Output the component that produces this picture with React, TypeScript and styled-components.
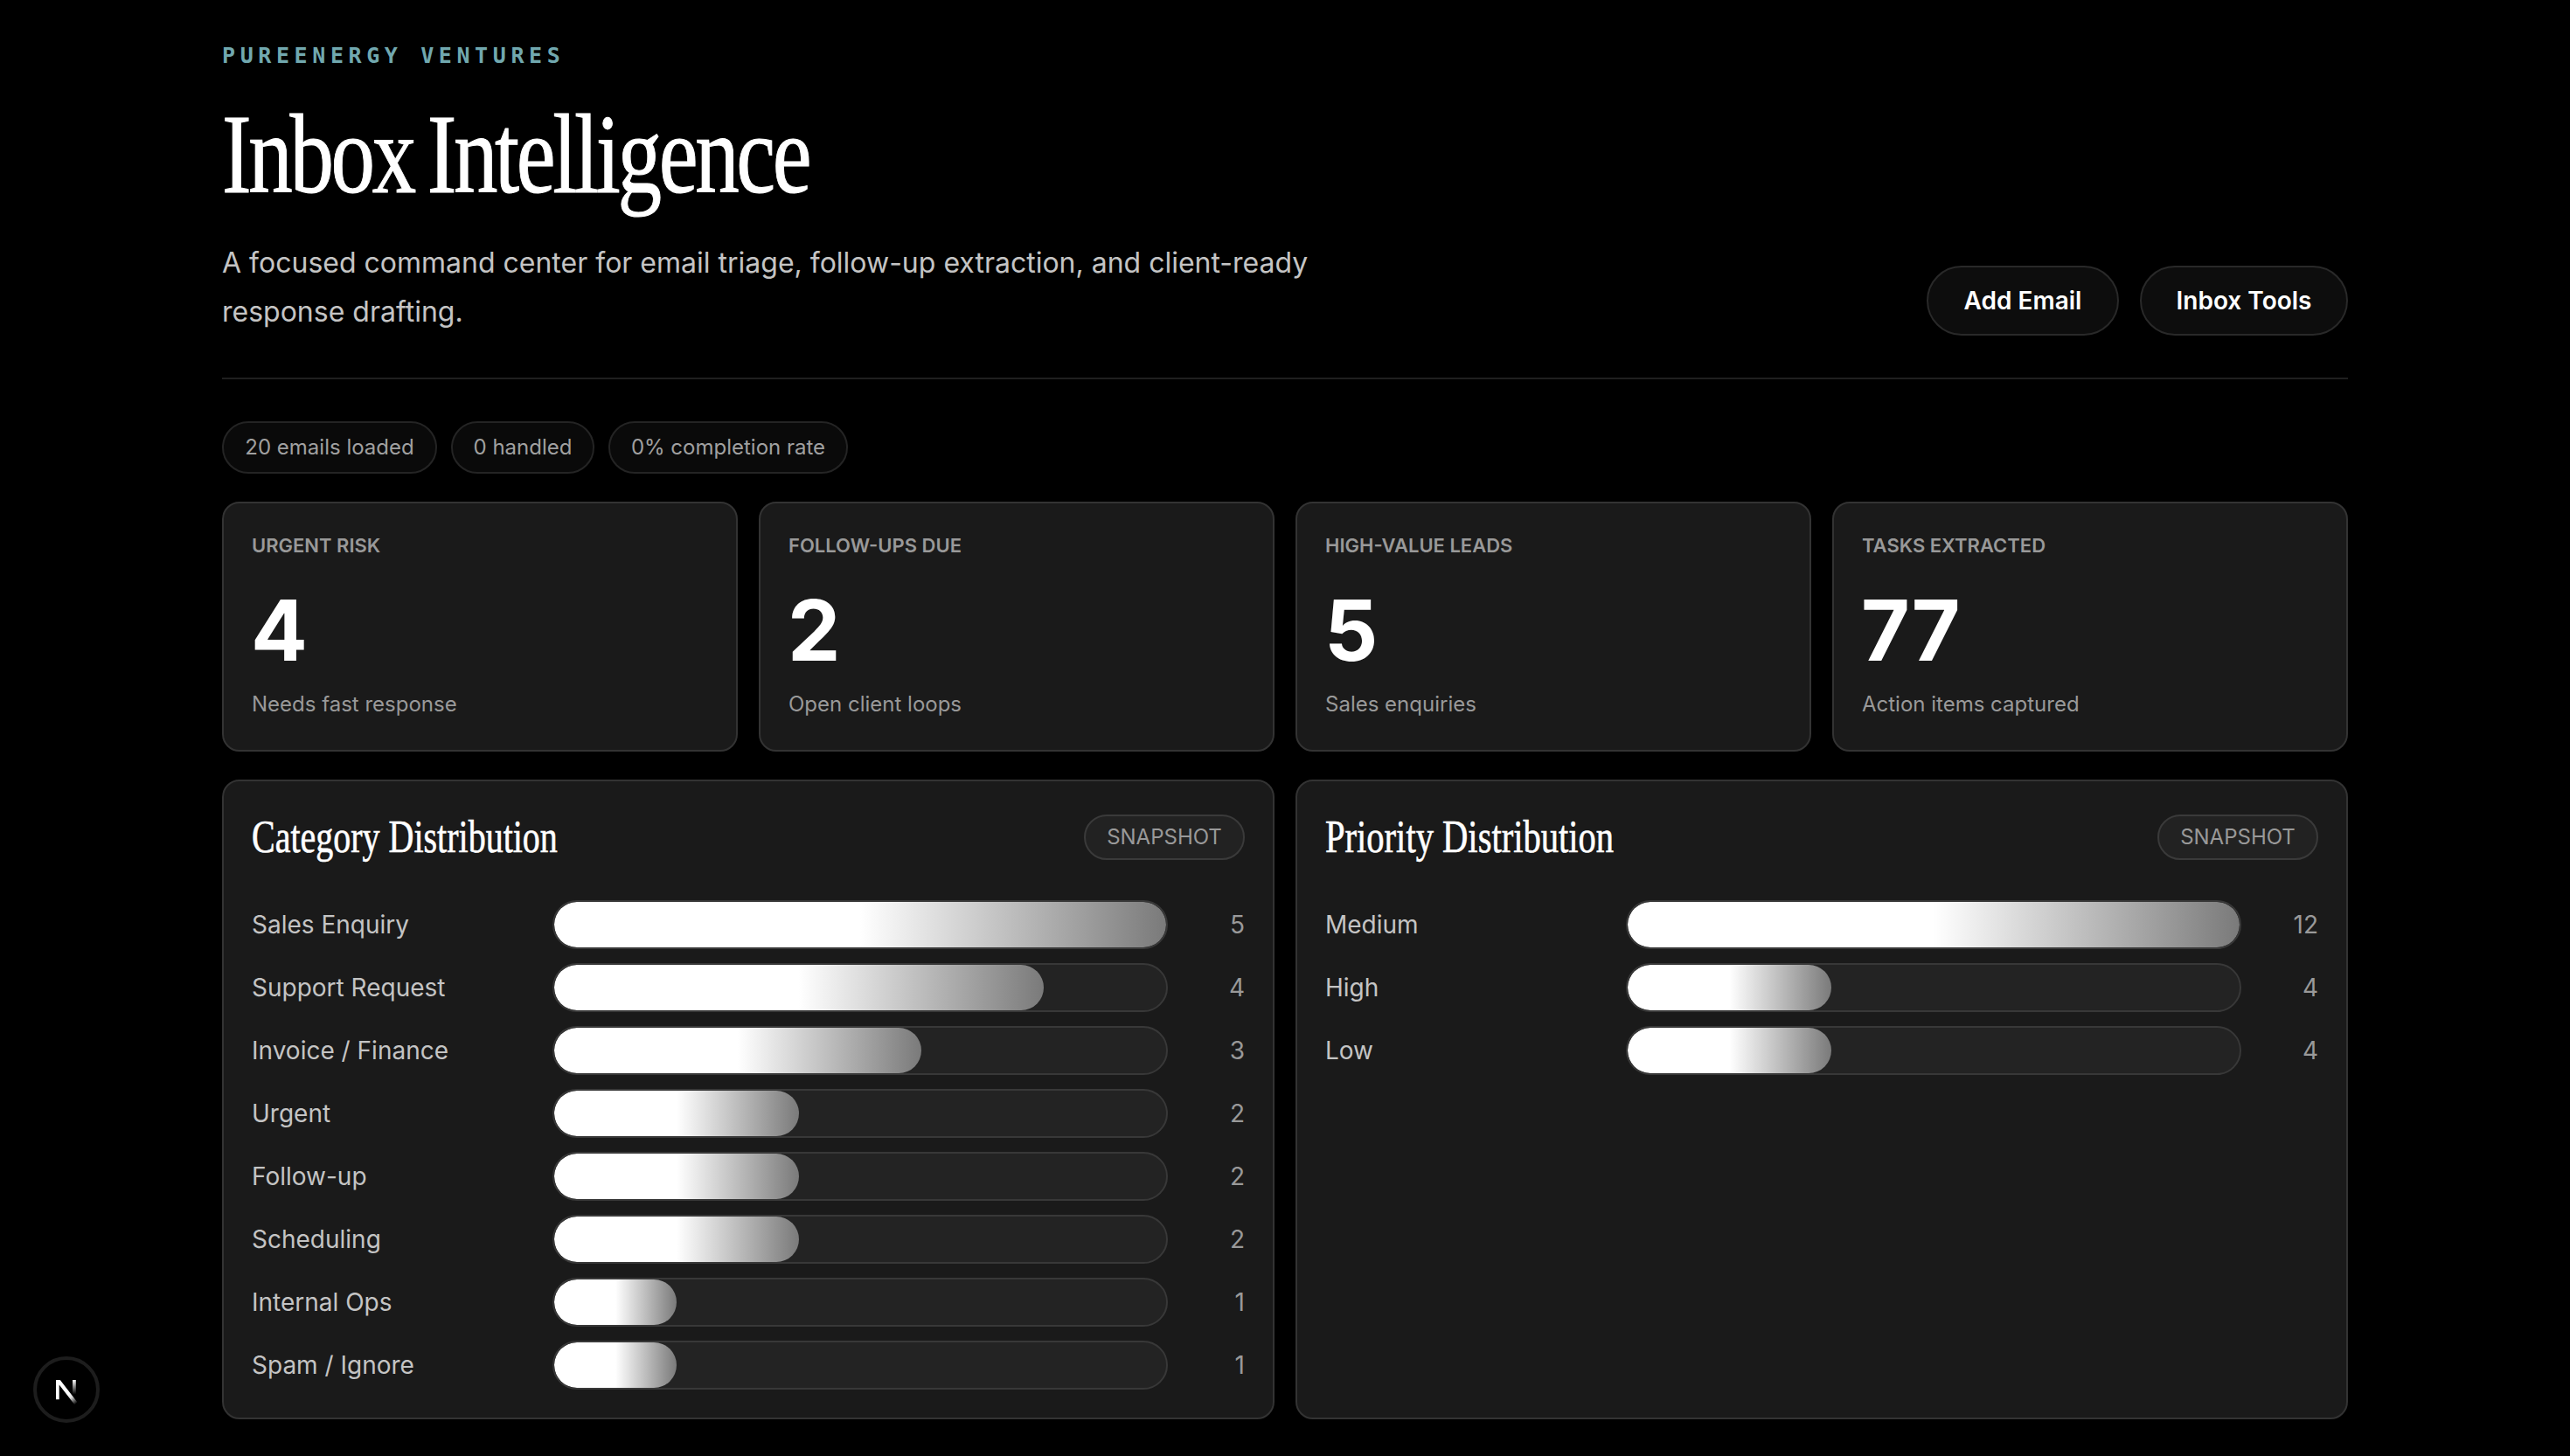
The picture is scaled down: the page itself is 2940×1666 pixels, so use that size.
import React from "react";
import styled, { createGlobalStyle } from "styled-components";

const sans = `Inter, "Liberation Sans", sans-serif`;
const serif = `"Liberation Serif", "Times New Roman", serif`;
const mono = `"DejaVu Sans Mono", "Liberation Mono", monospace`;

const GlobalStyle = createGlobalStyle`
  *, *::before, *::after { box-sizing: border-box; }
  html, body { margin: 0; background: #000; }
  body {
    font-family: ${sans};
    font-optical-sizing: none;
    -webkit-font-smoothing: antialiased;
    color: #fff;
    overflow: hidden;
  }
  h1, h2, p { margin: 0; font-weight: 400; }
`;

const Page = styled.main`
  width: 2432px;
  height: 1666px;
  margin: 0 auto;
  padding-top: 46px;
`;

const Header = styled.header`
  display: flex;
  justify-content: space-between;
  align-items: flex-end;
  height: 388px;
  padding-bottom: 48px;
  border-bottom: 2px solid #1f1f1f;
`;

const Intro = styled.div`
  align-self: flex-start;
`;

const Eyebrow = styled.p`
  font: 700 25px/36px ${mono};
  letter-spacing: 5.6px;
  color: #71a8af;
  white-space: nowrap;
`;

const Title = styled.h1`
  margin-top: 34px;
  font: 400 130px/120px ${serif};
  letter-spacing: -4.3px;
  word-spacing: -8px;
  -webkit-text-stroke: 1px #fff;
  transform: scaleX(0.777);
  transform-origin: 0 50%;
  white-space: nowrap;
`;

const Lead = styled.p`
  width: 1360px;
  margin-top: 37px;
  font-size: 32px;
  line-height: 56px;
  color: #c4c4c4;
`;

const Actions = styled.div`
  display: flex;
  gap: 24px;
`;

const Button = styled.button<{ $width: number }>`
  width: ${(p) => p.$width}px;
  height: 80px;
  padding: 0;
  border: 2px solid #292929;
  border-radius: 40px;
  background: #0d0d0d;
  color: #fff;
  font: 600 28px/40px ${sans};
  white-space: nowrap;
`;

const Chips = styled.div`
  display: flex;
  gap: 16px;
  margin-top: 48px;
`;

const Chip = styled.span<{ $width: number }>`
  display: flex;
  align-items: center;
  justify-content: center;
  width: ${(p) => p.$width}px;
  height: 60px;
  padding-bottom: 2px;
  border: 2px solid #242424;
  border-radius: 30px;
  background: #0a0a0a;
  color: #a0a0a0;
  font-size: 24px;
  white-space: nowrap;
`;

const Cards = styled.section`
  display: grid;
  grid-template-columns: repeat(4, 1fr);
  gap: 24px;
  margin-top: 32px;
`;

const Surface = styled.article`
  padding: 32px;
  border: 2px solid #333;
  border-radius: 20px;
  background: #1a1a1a;
`;

const Card = styled(Surface)`
  height: 286px;
`;

const CardLabel = styled.p`
  padding-top: 1px;
  font-size: 22px;
  font-weight: 600;
  line-height: 30px;
  color: #999;
  text-transform: uppercase;
`;

const CardValue = styled.p`
  margin-top: 34px;
  font-size: 96px;
  font-weight: 650;
  line-height: 96px;
  text-indent: -1px;
`;

const CardNote = styled.p`
  margin-top: 19px;
  font-size: 24px;
  line-height: 36px;
  color: #999;
`;

const Panels = styled.section`
  display: grid;
  grid-template-columns: repeat(2, 1fr);
  gap: 24px;
  margin-top: 32px;
`;

const Panel = styled(Surface)`
  height: 732px;
`;

const PanelHead = styled.div`
  display: flex;
  justify-content: space-between;
  align-items: center;
  height: 64px;
  margin-bottom: 40px;
`;

const PanelTitle = styled.h2<{ $stretch: number }>`
  font: 400 52px/64px ${serif};
  -webkit-text-stroke: 0.6px #fff;
  transform: scaleX(${(p) => p.$stretch});
  transform-origin: 0 50%;
  white-space: nowrap;
`;

const Tag = styled.span`
  display: flex;
  align-items: center;
  justify-content: center;
  width: 184px;
  height: 52px;
  padding-bottom: 2px;
  border: 2px solid #3a3a3a;
  border-radius: 26px;
  background: #222;
  color: #999;
  font-size: 24px;
`;

const Rows = styled.div`
  display: grid;
  gap: 16px;
`;

const Row = styled.div`
  display: grid;
  grid-template-columns: 320px 1fr 64px;
  column-gap: 24px;
  align-items: center;
  height: 56px;
  font-size: 28px;
`;

const RowLabel = styled.span`
  color: #c4c4c4;
  white-space: nowrap;
`;

const Track = styled.div`
  height: 56px;
  border: 2px solid #383838;
  border-radius: 28px;
  background: #232323;
  overflow: hidden;
`;

const Fill = styled.div`
  height: 100%;
  border-radius: 28px;
  background: linear-gradient(90deg, #fff 0%, #fff 50%, #7a7a7a 100%);
`;

const Count = styled.span`
  color: #999;
  text-align: right;
`;

const DevBadge = styled.div`
  position: fixed;
  left: 38px;
  top: 1552px;
  width: 76px;
  height: 76px;
  border-radius: 50%;
  background: #000;
  border: 4px solid #1d1d1d;

  svg { display: block; margin: -4px; }
`;

type Entry = [string, number];

const cards: [string, number, string][] = [
  ["Urgent Risk", 4, "Needs fast response"],
  ["Follow-ups Due", 2, "Open client loops"],
  ["High-Value Leads", 5, "Sales enquiries"],
  ["Tasks Extracted", 77, "Action items captured"],
];

const categories: Entry[] = [
  ["Sales Enquiry", 5],
  ["Support Request", 4],
  ["Invoice / Finance", 3],
  ["Urgent", 2],
  ["Follow-up", 2],
  ["Scheduling", 2],
  ["Internal Ops", 1],
  ["Spam / Ignore", 1],
];

const priorities: Entry[] = [
  ["Medium", 12],
  ["High", 4],
  ["Low", 4],
];

type DistributionProps = { title: string; stretch: number; data: Entry[] };

function Distribution({ title, stretch, data }: DistributionProps) {
  const max = Math.max(...data.map(([, n]) => n));
  return (
    <Panel>
      <PanelHead>
        <PanelTitle $stretch={stretch}>{title}</PanelTitle>
        <Tag>SNAPSHOT</Tag>
      </PanelHead>
      <Rows>
        {data.map(([label, n]) => (
          <Row key={label}>
            <RowLabel>{label}</RowLabel>
            <Track>
              <Fill style={{ width: `${(n / max) * 100}%` }} />
            </Track>
            <Count>{n}</Count>
          </Row>
        ))}
      </Rows>
    </Panel>
  );
}

function NextLogo() {
  return (
    <svg width="76" height="76" viewBox="0 0 76 76">
      <defs>
        <linearGradient id="diag" gradientUnits="userSpaceOnUse" x1="41" y1="43" x2="49.5" y2="54">
          <stop stopColor="#fff" />
          <stop offset="0.35" stopColor="#fff" stopOpacity="0.85" />
          <stop offset="1" stopColor="#fff" stopOpacity="0" />
        </linearGradient>
        <linearGradient id="stem" gradientUnits="userSpaceOnUse" x1="47" y1="27" x2="47" y2="43.5">
          <stop stopColor="#fff" />
          <stop offset="1" stopColor="#fff" stopOpacity="0" />
        </linearGradient>
      </defs>
      <path d="M26 27 H30.8 L50.3 52.3 L47.7 55.7 L29.7 32.5 V49.3 H26 Z" fill="url(#diag)" />
      <path d="M45 27 H48.8 V44 H45 Z" fill="url(#stem)" />
    </svg>
  );
}

export default function App() {
  return (
    <>
      <GlobalStyle />
      <Page>
        <Header>
          <Intro>
            <Eyebrow>PUREENERGY VENTURES</Eyebrow>
            <Title>Inbox Intelligence</Title>
            <Lead>
              A focused command center for email triage, follow-up extraction, and client-ready
              response drafting.
            </Lead>
          </Intro>
          <Actions>
            <Button $width={220}>Add Email</Button>
            <Button $width={238}>Inbox Tools</Button>
          </Actions>
        </Header>
        <Chips>
          <Chip $width={246}>20 emails loaded</Chip>
          <Chip $width={164}>0 handled</Chip>
          <Chip $width={274}>0% completion rate</Chip>
        </Chips>
        <Cards>
          {cards.map(([label, value, note]) => (
            <Card key={label}>
              <CardLabel>{label}</CardLabel>
              <CardValue>{value}</CardValue>
              <CardNote>{note}</CardNote>
            </Card>
          ))}
        </Cards>
        <Panels>
          <Distribution title="Category Distribution" stretch={0.769} data={categories} />
          <Distribution title="Priority Distribution" stretch={0.78} data={priorities} />
        </Panels>
      </Page>
      <DevBadge>
        <NextLogo />
      </DevBadge>
    </>
  );
}
